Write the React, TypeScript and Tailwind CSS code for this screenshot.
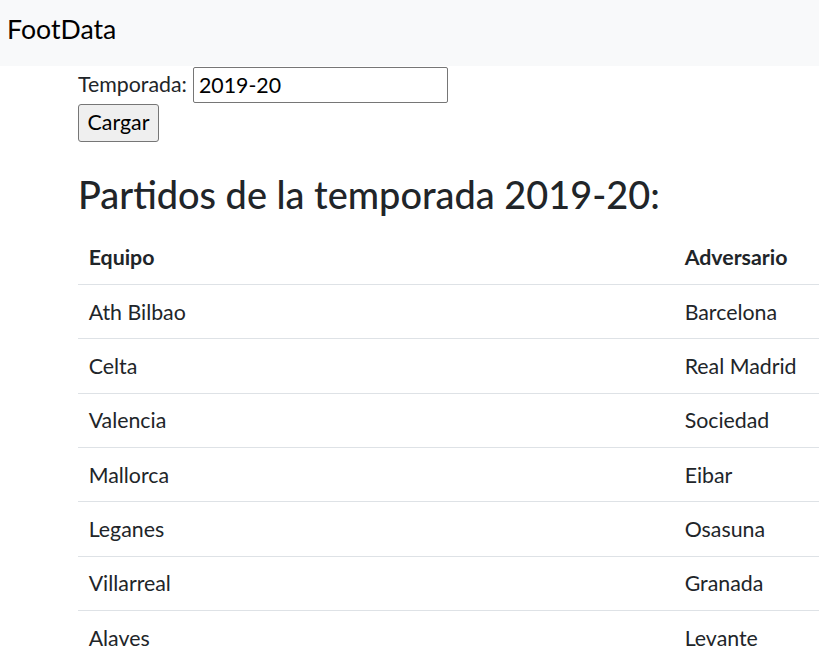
import React from "react";

const rows: [string, string][] = [
  ["Ath Bilbao", "Barcelona"],
  ["Celta", "Real Madrid"],
  ["Valencia", "Sociedad"],
  ["Mallorca", "Eibar"],
  ["Leganes", "Osasuna"],
  ["Villarreal", "Granada"],
  ["Alaves", "Levante"],
];

export default function App() {
  return (
    <div
      className="w-[819px] h-[654px] overflow-hidden bg-white text-[#212529]"
      style={{ fontFamily: 'Lato, "Noto Sans", sans-serif' }}
    >
      <nav className="h-[66px] bg-[#f8f9fa] flex items-center pl-[7px] pb-[8px]">
        <span className="text-[26.67px] leading-[40px] text-black">FootData</span>
      </nav>
      <div className="pl-[78px]">
        <div className="flex items-center h-[37px] text-[21.33px]">
          <span className="mr-[6px]">Temporada:</span>
          <input
            className="w-[255px] h-[36px] mt-[1px] border border-[#767676] rounded-[2px] px-[5px] text-[21.33px] text-black outline-none"
            defaultValue="2019-20"
          />
        </div>
        <button className="mt-[1px] h-[38px] w-[81px] border border-[#767676] rounded-[3px] bg-[#efefef] text-[21.33px] text-black">
          Cargar
        </button>
        <h2 className="mt-[27px] mb-[10.67px] text-[37.9px] leading-[51px] font-medium">
          Partidos de la temporada 2019-20:
        </h2>
        <div className="w-[1100px]">
          <div className="flex border-b border-[#dee2e6] text-[21.33px] leading-[32px] font-bold">
            <div className="w-[596px] px-[10.67px] py-[10.67px]">Equipo</div>
            <div className="w-[200px] px-[10.67px] py-[10.67px]">Adversario</div>
          </div>
          {rows.map(([a, b]) => (
            <div key={a} className="flex border-b border-[#dee2e6] text-[21.33px] leading-[32px]">
              <div className="w-[596px] px-[10.67px] py-[10.67px]">{a}</div>
              <div className="w-[200px] px-[10.67px] py-[10.67px]">{b}</div>
            </div>
          ))}
        </div>
      </div>
    </div>
  );
}
